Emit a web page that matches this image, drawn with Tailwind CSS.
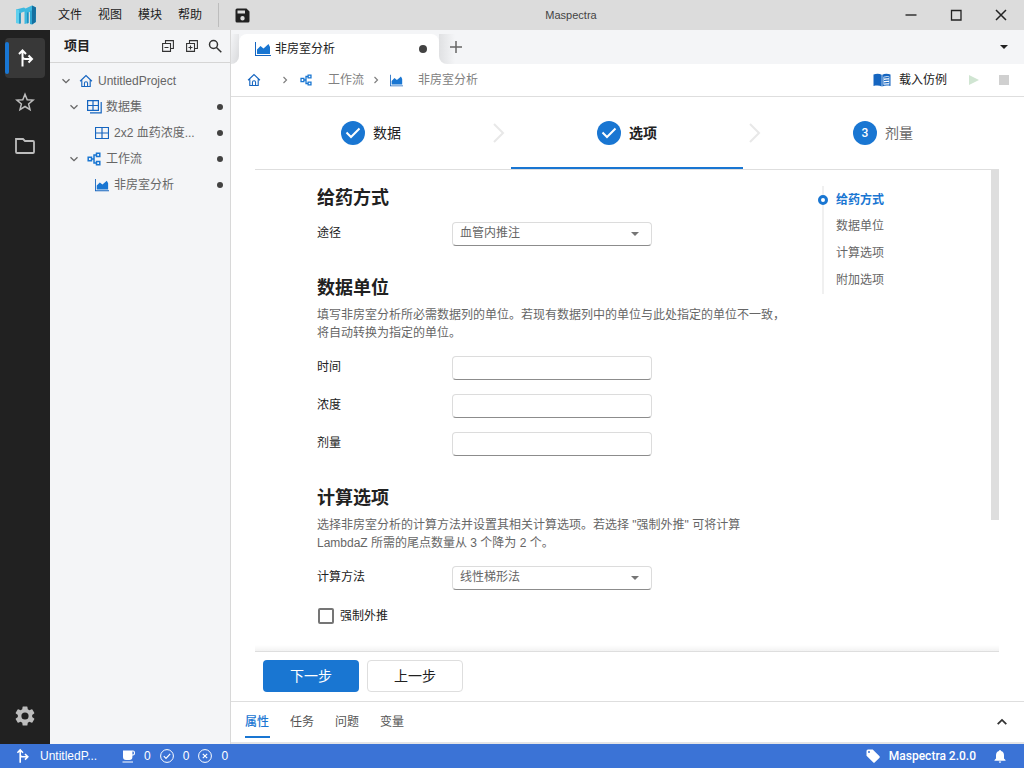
<!DOCTYPE html>
<html lang="zh-CN">
<head>
<meta charset="utf-8">
<title>Maspectra</title>
<script src="https://cdn.jsdelivr.net/npm/@tailwindcss/browser@4"></script>
</head>
<body class="flex h-screen flex-col overflow-hidden bg-white font-['Liberation_Sans','Noto_Sans_CJK_SC',sans-serif] text-xs text-[#212121]">

<svg class="hidden" aria-hidden="true">
  <symbol id="route" viewBox="0 0 20 20" fill="none" stroke="currentColor" stroke-width="2"><path d="M6.500 18.500V2.500M3 6l3.500-3.500L10 6M6.500 8.500c0 1.600 1.200 2.500 3 2.500h6M12.500 7.500 16 11l-3.500 3.500"/></symbol>
  <symbol id="home" viewBox="0 0 16 16" fill="none" stroke="currentColor"><path stroke-width="1.300" d="M1.200 8.300 8 1.800l6.800 6.500M3.200 7.200v7.100h9.600V7.200"/><path stroke-width="1.200" d="M6.200 14.200v-3.500a1.800 1.800 0 0 1 3.600 0v3.500"/></symbol>
  <symbol id="chart" viewBox="0 0 16 16"><path fill="#1565c0" d="M0 1h1v13h15v1H0z"/><path fill="#1976d2" d="M2 13V8.500L5.500 5l3 2.500L13.500 3l1.500 3v7z"/></symbol>
  <symbol id="flow" viewBox="0 0 14 14" fill="none" stroke="currentColor" stroke-width="1.500"><path d="M1.200 5.200h3.300v3.600H1.200zM9.500 1.200h3.300v3.300H9.500zM9.500 9.500h3.300v3.300H9.500zM4.500 7H7M9.500 2.900H7v8.200h2.500"/></symbol>
  <symbol id="grid" viewBox="0 0 14 12" fill="none" stroke="currentColor"><path d="M.5.500h13v11H.5zM7 .5v11M.5 6h13" stroke-width="1.200"/></symbol>
  <symbol id="grids" viewBox="0 0 15 14" fill="none" stroke="currentColor"><path d="M.6.600h10.800v9.800H.6zM6 .6v9.800M.6 5.500h10.800M3 12.900h11.200V2" stroke-width="1.200"/></symbol>
  <symbol id="down" viewBox="0 0 10 10" fill="none" stroke="currentColor"><path d="m1.500 3.200 3.500 3.500 3.500-3.500" stroke-width="1.300"/></symbol>
  <symbol id="right" viewBox="0 0 10 10" fill="none" stroke="currentColor"><path d="M3.500 2 6.500 5l-3 3" stroke-width="1.200"/></symbol>
  <symbol id="caret" viewBox="0 0 8 4"><path fill="currentColor" d="M0 0h8L4 4z"/></symbol>
  <symbol id="done" viewBox="0 0 24 24"><circle cx="12" cy="12" r="12" fill="#1976d2"/><path d="m5.500 11.500 4.500 4.500L18.500 7.500" fill="none" stroke="#fff" stroke-width="2"/></symbol>
  <symbol id="next" viewBox="0 0 12 20" fill="none" stroke="#e8e8e8"><path d="m1 1 9 9-9 9" stroke-width="2"/></symbol>
</svg>

<header class="grid h-[30px] shrink-0 grid-cols-3 items-center bg-[#dcdcdc]">
  <div class="flex h-full items-center">
    <svg class="ml-4 h-5 w-5" viewBox="0 0 20 20"><path fill="#3db8df" d="M0 4.500 8 2.500l1.500 1L16 .5l4 2-.2 14.500L16 19.500V6l-3.500 1.500V18L8.500 19V6.500L4.500 8v10.500L0 18z"/><path fill="#5fd0ee" d="M0 4.500 3 5v13.500L0 18z"/><path fill="#1f8fc0" d="M3.200 8.200 4.800 7.800v10.700l-1.600.3zM11 7.500l1.600-.3V18l-1.600.5z"/><path fill="#156fa0" d="M16 .5l4 2-.2 14.500L16 19.500z"/><path fill="#2ba5d2" d="M14 6l2-.8v14.300L14 19z"/></svg>
    <nav class="ml-[22px] flex gap-4" aria-label="主菜单">
      <button>文件</button><button>视图</button><button>模块</button><button>帮助</button>
    </nav>
    <div class="ml-4 h-6 w-px bg-[#bdbdbd]"></div>
    <button class="ml-4" aria-label="保存"><svg class="h-[15px] w-[15px]" viewBox="0 0 15 15"><path fill="#212121" fill-rule="evenodd" d="M2 .5h9.500l3 3V13a1.500 1.500 0 0 1-1.500 1.500H2A1.500 1.500 0 0 1 .5 13V2A1.500 1.500 0 0 1 2 .5zM2.500 2.500v3H10v-3zM7.500 8a2.200 2.200 0 1 0 0 4.400 2.200 2.200 0 0 0 0-4.400z"/></svg></button>
  </div>
  <h1 class="pl-[118px] text-center text-[11px] text-[#444]">Maspectra</h1>
  <div class="flex items-center justify-end gap-[33px] pr-[17px]">
    <button aria-label="最小化"><svg class="h-3 w-3" viewBox="0 0 12 12"><path d="M.5 6h11" stroke="#333" stroke-width="1.500"/></svg></button>
    <button aria-label="最大化"><svg class="h-3 w-3" viewBox="0 0 12 12"><path d="M1.500 1.500h9.500v9.500H1.500z" fill="none" stroke="#222" stroke-width="1.300"/></svg></button>
    <button aria-label="关闭"><svg class="h-3 w-3" viewBox="0 0 12 12"><path d="m1 1 10 10M11 1 1 11" stroke="#222" stroke-width="1.500"/></svg></button>
  </div>
</header>

<div class="flex min-h-0 flex-1">
  <nav class="flex w-[50px] shrink-0 flex-col items-center bg-[#212121] pt-2 pb-4 text-[#bdbdbd]" aria-label="活动栏">
    <button class="flex h-10 w-10 items-center rounded bg-[#383838] text-white" aria-label="项目"><span class="h-8 w-1 rounded-sm bg-[#1976d2]"></span><svg class="ml-[7px] h-5 w-5"><use href="#route"/></svg></button>
    <button class="mt-1 flex h-10 w-10 items-center justify-center" aria-label="收藏"><svg class="h-5 w-5" viewBox="0 0 20 20"><path d="m10 2.200 2.200 5.500 5.900.4-4.500 3.800 1.400 5.700-5-3.100-5 3.100 1.400-5.700L1.900 8.100l5.900-.4z" fill="none" stroke="currentColor" stroke-width="1.500"/></svg></button>
    <button class="mt-1 flex h-10 w-10 items-center justify-center" aria-label="文件夹"><svg class="h-4 w-5" viewBox="0 0 20 16"><path d="M1 1h7l2 2h8a1 1 0 0 1 1 1v10a1 1 0 0 1-1 1H2a1 1 0 0 1-1-1z" fill="none" stroke="currentColor" stroke-width="1.800"/></svg></button>
    <button class="mt-auto" aria-label="设置"><svg class="h-6 w-6" viewBox="0 0 24 24"><path fill="currentColor" d="M19.140 12.940c.04-.3.060-.61.060-.94s-.02-.64-.07-.94l2.030-1.580a.49.490 0 0 0 .12-.61l-1.920-3.320a.49.490 0 0 0-.59-.22l-2.390.960a7 7 0 0 0-1.620-.94l-.36-2.540A.480.480 0 0 0 13.920 2.400h-3.840a.48.480 0 0 0-.48.410l-.36 2.540c-.59.240-1.130.570-1.620.940l-2.390-.96a.49.490 0 0 0-.59.220L2.730 8.870a.48.480 0 0 0 .12.610l2.030 1.580a6 6 0 0 0 0 1.880l-2.030 1.580a.49.490 0 0 0-.12.610l1.920 3.320c.12.220.370.290.590.220l2.390-.96c.5.380 1.030.700 1.620.940l.36 2.540c.05.240.240.410.480.410h3.840c.24 0 .44-.17.470-.41l.36-2.540a7 7 0 0 0 1.620-.94l2.390.960c.22.080.470 0 .59-.22l1.920-3.320a.48.480 0 0 0-.12-.61zM12 15.600a3.600 3.600 0 1 1 0-7.200 3.600 3.600 0 0 1 0 7.200z"/></svg></button>
  </nav>

  <aside class="w-[181px] shrink-0 border-r border-[#d8d8d8] bg-[#f4f5f7]">
    <div class="flex h-[33px] items-center border-b border-[#d5d5d5] pr-2 pl-[14px] text-[#333]">
      <h2 class="flex-1 text-[13px] font-bold text-[#212121]">项目</h2>
      <div class="flex items-center gap-3">
        <button aria-label="全部折叠"><svg class="h-3 w-3" viewBox="0 0 12 12"><path d="M3.500 3V.6h7.900v7.900H9M.6 3.500h7.900v7.900H.6zM2.500 7.500h4" fill="none" stroke="currentColor" stroke-width="1.100"/></svg></button>
        <button aria-label="全部展开"><svg class="h-3 w-3" viewBox="0 0 12 12"><path d="M3.500 3V.6h7.900v7.900H9M.6 3.500h7.900v7.900H.6zM2.500 7.500h4M4.500 5.500v4" fill="none" stroke="currentColor" stroke-width="1.100"/></svg></button>
        <button class="-ml-[2px]" aria-label="搜索"><svg class="h-[14px] w-[14px]" viewBox="0 0 14 14"><path d="M9.500 5.500a4 4 0 1 1-8 0 4 4 0 0 1 8 0zM8.500 8.500l4.800 4.800" fill="none" stroke="currentColor" stroke-width="1.500"/></svg></button>
      </div>
    </div>
    <ul class="pt-[5px] text-[#666]">
      <li class="flex h-[26px] items-center pr-[7px] pl-[11px]"><svg class="h-[10px] w-[10px]"><use href="#down"/></svg><svg class="ml-2 h-[14px] w-[14px] text-[#1565c0]"><use href="#home"/></svg><span class="ml-[5px]">UntitledProject</span></li>
      <li class="flex h-[26px] items-center pr-[7px] pl-[19px]"><svg class="h-[10px] w-[10px]"><use href="#down"/></svg><svg class="ml-2 h-[14px] w-[15px] text-[#1565c0]"><use href="#grids"/></svg><span class="ml-1">数据集</span><i class="ml-auto h-[6px] w-[6px] rounded-full bg-[#424242]"></i></li>
      <li class="flex h-[26px] items-center pr-[7px] pl-[45px]"><svg class="h-3 w-[14px] text-[#1565c0]"><use href="#grid"/></svg><span class="ml-[5px]">2x2 血药浓度...</span><i class="ml-auto h-[6px] w-[6px] rounded-full bg-[#424242]"></i></li>
      <li class="flex h-[26px] items-center pr-[7px] pl-[19px]"><svg class="h-[10px] w-[10px]"><use href="#down"/></svg><svg class="ml-2 h-[14px] w-[14px] text-[#1976d2]"><use href="#flow"/></svg><span class="ml-[5px]">工作流</span><i class="ml-auto h-[6px] w-[6px] rounded-full bg-[#424242]"></i></li>
      <li class="flex h-[26px] items-center pr-[7px] pl-[45px]"><svg class="h-[14px] w-[14px]"><use href="#chart"/></svg><span class="ml-[5px]">非房室分析</span><i class="ml-auto h-[6px] w-[6px] rounded-full bg-[#424242]"></i></li>
    </ul>
  </aside>

  <main class="flex min-w-0 flex-1 flex-col">
    <div class="flex h-[34px] shrink-0 items-end bg-[#f4f5f7]">
      <div class="h-[30px] w-2 bg-white"><div class="h-full rounded-br-lg bg-linear-to-br from-[#f4f5f7] to-[#d8d9db]"></div></div>
      <div class="flex h-[30px] w-[200px] items-center rounded-t-lg bg-white pr-3 pl-4">
        <svg class="h-4 w-4"><use href="#chart"/></svg><span class="ml-1">非房室分析</span><i class="ml-auto h-2 w-2 rounded-full bg-[#424242]"></i>
      </div>
      <div class="h-[30px] w-4 bg-linear-to-r from-white from-50% to-[#f4f5f7] to-50%"><div class="h-full rounded-bl-lg bg-linear-to-r from-[#e0e1e3] to-[#f4f5f7]"></div></div>
      <button class="mb-[11px] -ml-[5px]" aria-label="新建标签"><svg class="h-3 w-3" viewBox="0 0 12 12"><path d="M6 0v12M0 6h12" stroke="#666" stroke-width="1.500"/></svg></button>
      <button class="mr-4 mb-[15px] ml-auto" aria-label="标签列表"><svg class="h-1 w-2"><use href="#caret"/></svg></button>
    </div>

    <div class="flex h-[33px] shrink-0 items-center border-b border-[#dedede] pr-[15px] pl-4 text-[#808080]">
      <a href="#" aria-label="主页"><svg class="h-[14px] w-[14px] text-[#1565c0]"><use href="#home"/></svg></a>
      <svg class="ml-[19px] h-[10px] w-[10px]"><use href="#right"/></svg>
      <svg class="ml-[10px] h-3 w-3 text-[#1976d2]"><use href="#flow"/></svg>
      <a href="#" class="ml-4">工作流</a>
      <svg class="ml-[7px] h-[10px] w-[10px]"><use href="#right"/></svg>
      <svg class="ml-[9px] h-[13px] w-[13px]"><use href="#chart"/></svg>
      <a href="#" class="ml-[15px]">非房室分析</a>
      <button class="ml-auto flex items-center gap-2 text-[#212121]"><svg class="h-[14px] w-[18px]" viewBox="0 0 18 14"><path fill="#1565c0" d="M.5 1.500C3.500.5 6.500.5 8.700 1.800v11.700C6.500 12.300 3.500 12.300.5 13zM9.300 1.800c2.200-1.300 5.200-1.300 8.200-.3V13c-3-.7-6-.7-8.200.5z"/><path d="M10.500 3.700q2.800-.9 5.800-.3v8.200q-3-.5-5.800.2z" fill="#fff"/><path d="M11 5q2.500-.7 4.800-.3M11 7.500q2.500-.7 4.800-.3M11 10q2.500-.7 4.800-.3" stroke="#1565c0" stroke-width="1.200" fill="none"/></svg>载入仿例</button>
      <button class="ml-[22px]" aria-label="运行"><svg class="h-[10px] w-[10px]" viewBox="0 0 10 10"><path fill="#d0e5d2" d="M0 0v10l10-5z"/></svg></button>
      <button class="ml-5 h-[10px] w-[10px] bg-[#d0d0d0]" aria-label="停止"></button>
    </div>

    <div class="flex min-h-0 flex-1 flex-col pr-[25px] pl-6">
      <ol class="flex h-[73px] shrink-0 border-b border-[#dedede] text-sm">
        <li class="flex flex-1 items-center justify-center gap-2"><svg class="h-6 w-6"><use href="#done"/></svg>数据</li>
        <li class="flex w-6 items-center justify-center" aria-hidden="true"><svg class="h-5 w-3"><use href="#next"/></svg></li>
        <li class="flex flex-1 items-center justify-center gap-2 border-b-2 border-[#1976d2] pt-[2px] font-bold" aria-current="step"><svg class="h-6 w-6"><use href="#done"/></svg>选项</li>
        <li class="flex w-6 items-center justify-center" aria-hidden="true"><svg class="h-5 w-3"><use href="#next"/></svg></li>
        <li class="flex flex-1 items-center justify-center gap-2 text-[#666]"><span class="flex h-6 w-6 items-center justify-center rounded-full bg-[#1976d2] font-['Roboto',sans-serif] text-xs font-medium text-white">3</span>剂量</li>
      </ol>

      <div class="flex min-h-0 flex-1 overflow-hidden">
        <form class="ml-[62px] w-[470px] pt-4">
          <section>
            <h2 class="text-lg leading-6 font-bold">给药方式</h2>
            <div class="mt-3 flex"><label for="route-in" class="w-[135px] leading-[22px]">途径</label>
              <div class="relative w-[200px]"><select id="route-in" class="h-6 w-full appearance-none rounded border border-[#dcdcdc] border-b-[#8c8c8c] bg-white pr-6 pb-[2px] pl-[7px] text-[#666]"><option>血管内推注</option></select><svg class="pointer-events-none absolute top-[10px] right-[13px] h-1 w-2 text-[#757575]"><use href="#caret"/></svg></div></div>
          </section>
          <section class="mt-[30px]">
            <h2 class="text-lg leading-6 font-bold">数据单位</h2>
            <p class="mt-[6px] leading-[18px] text-[#666]">填写非房室分析所必需数据列的单位。若现有数据列中的单位与此处指定的单位不一致，将自动转换为指定的单位。</p>
            <div class="mt-[14px] flex flex-col gap-[14px]">
              <div class="flex"><label for="time" class="w-[135px] leading-[22px]">时间</label><input id="time" class="h-6 w-[200px] rounded border border-[#dcdcdc] border-b-[#8c8c8c] px-2"></div>
              <div class="flex"><label for="conc" class="w-[135px] leading-[22px]">浓度</label><input id="conc" class="h-6 w-[200px] rounded border border-[#dcdcdc] border-b-[#8c8c8c] px-2"></div>
              <div class="flex"><label for="dose" class="w-[135px] leading-[22px]">剂量</label><input id="dose" class="h-6 w-[200px] rounded border border-[#dcdcdc] border-b-[#8c8c8c] px-2"></div>
            </div>
          </section>
          <section class="mt-[30px]">
            <h2 class="text-lg leading-6 font-bold">计算选项</h2>
            <p class="mt-[6px] leading-[18px] text-[#666]">选择非房室分析的计算方法并设置其相关计算选项。若选择 "强制外推" 可将计算<br>LambdaZ 所需的尾点数量从 3 个降为 2 个。</p>
            <div class="mt-[14px] flex"><label for="method" class="w-[135px] leading-[22px]">计算方法</label>
              <div class="relative w-[200px]"><select id="method" class="h-6 w-full appearance-none rounded border border-[#dcdcdc] border-b-[#8c8c8c] bg-white pr-6 pb-[2px] pl-[7px] text-[#666]"><option>线性梯形法</option></select><svg class="pointer-events-none absolute top-[10px] right-[13px] h-1 w-2 text-[#757575]"><use href="#caret"/></svg></div></div>
            <label class="mt-[14px] flex h-6 items-center gap-[6px] pl-px"><input type="checkbox" class="h-4 w-4 appearance-none rounded-xs border-2 border-[#757575] bg-white checked:bg-[#1976d2]">强制外推</label>
          </section>
        </form>
        <nav class="mt-4 ml-auto h-[108px] w-[169px] border-l-2 border-[#f0f0f0] text-[#666]" aria-label="目录">
          <a href="#" class="-ml-[6px] flex h-[27px] items-center gap-2 font-bold text-[#1976d2]"><i class="h-[10px] w-[10px] rounded-full border-3 border-[#1976d2] bg-white"></i>给药方式</a>
          <a href="#" class="flex h-[27px] items-center pb-[2px] pl-3">数据单位</a>
          <a href="#" class="flex h-[27px] items-center pb-[2px] pl-3">计算选项</a>
          <a href="#" class="flex h-[27px] items-center pb-[2px] pl-3">附加选项</a>
        </nav>
        <div class="h-8/11 w-2 bg-[#dedede]"></div>
      </div>

      <div class="-mt-[6px] h-[6px] shrink-0 bg-linear-to-b from-transparent to-black/5"></div>
      <div class="flex h-[50px] shrink-0 gap-2 border-t border-[#dedede] px-2 pt-2 text-sm">
        <button class="h-8 w-24 rounded bg-[#1976d2] text-white">下一步</button>
        <button class="h-8 w-24 rounded border border-[#dedede]">上一步</button>
      </div>
    </div>

    <div class="flex h-[43px] shrink-0 border-t border-b-2 border-t-[#dedede] border-b-[#e4e4e6] pr-[17px] pl-[14px]">
      <div class="flex gap-5 pb-[4px] text-[#555]" role="tablist">
        <button role="tab" aria-selected="true" class="min-w-[25px] border-b-2 border-[#1976d2] pt-[5px] text-left font-medium text-[#1976d2]">属性</button>
        <button role="tab" class="min-w-[25px] border-b-2 border-transparent pt-[5px] text-left">任务</button>
        <button role="tab" class="min-w-[25px] border-b-2 border-transparent pt-[5px] text-left">问题</button>
        <button role="tab" class="min-w-[25px] border-b-2 border-transparent pt-[5px] text-left">变量</button>
      </div>
      <button class="ml-auto" aria-label="展开面板"><svg class="h-[10px] w-[10px]" viewBox="0 0 10 10"><path d="m.7 7.200 4.300-4.300 4.300 4.300" fill="none" stroke="#333" stroke-width="1.800"/></svg></button>
    </div>
  </main>
</div>

<footer class="flex h-6 shrink-0 items-center bg-[#3b73d6] pr-[18px] pl-[15px] text-white">
  <svg class="h-4 w-4"><use href="#route"/></svg><span class="ml-[9px] w-[82px]">UntitledP...</span>
  <svg class="h-[13px] w-[13px]" viewBox="0 0 13 13"><path fill="#fff" fill-rule="evenodd" d="M1 .5h10a2 2 0 0 1 2 2v1a2 2 0 0 1-2 2h-.6V7a3 3 0 0 1-3 3H4a3 3 0 0 1-3-3zM10.400 1.600v2.800h.6a.9.900 0 0 0 .9-.9v-1a.9.900 0 0 0-.9-.9zM.5 11.500h10.500v1H.5z"/></svg><span class="ml-[9px]">0</span>
  <svg class="ml-[9px] h-[14px] w-[14px]" viewBox="0 0 14 14" fill="none" stroke="#fff"><circle cx="7" cy="7" r="6.400"/><path d="m3.800 7.200 2.200 2.200 4.200-4.600" stroke-width="1.200"/></svg><span class="ml-[9px]">0</span>
  <svg class="ml-[9px] h-[14px] w-[14px]" viewBox="0 0 14 14" fill="none" stroke="#fff"><circle cx="7" cy="7" r="6.400"/><path d="m4.800 4.800 4.400 4.400M9.200 4.800 4.800 9.200" stroke-width="1.200"/></svg><span class="ml-[9px]">0</span>
  <svg class="ml-auto h-[14px] w-[14px]" viewBox="0 0 14 14"><path fill="#fff" fill-rule="evenodd" d="M.5 2A1.500 1.500 0 0 1 2 .5h4.700l6.600 6.600a1.200 1.200 0 0 1 0 1.800l-4.400 4.400a1.200 1.200 0 0 1-1.800 0L.5 6.700zM3 2a1 1 0 1 0 0 2 1 1 0 0 0 0-2z"/></svg><span class="ml-[9px] font-['Roboto',sans-serif] font-medium">Maspectra 2.0.0</span>
  <button class="ml-[18px]" aria-label="通知"><svg class="h-[13px] w-3" viewBox="0 0 12 13"><path fill="#fff" d="M5 1a1 1 0 0 1 2 0c2 .5 3 2.200 3 4.200v3.300l1.500 1.500v.8H.5V10L2 8.500V5.200C2 3.200 3 1.500 5 1zM4.800 11.500h2.400a1.200 1.200 0 0 1-2.400 0z"/></svg></button>
</footer>
</body>
</html>
